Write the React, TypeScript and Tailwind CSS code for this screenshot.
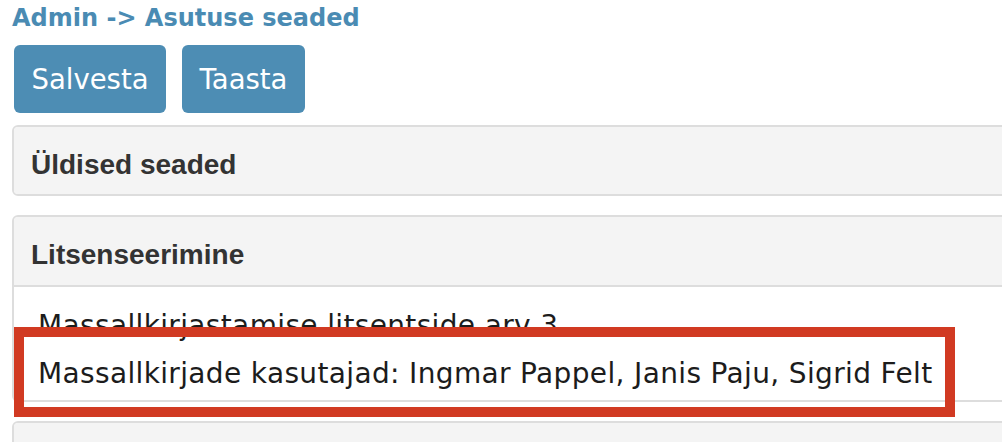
const bodyFont = "font-['DejaVu_Sans',Verdana,sans-serif]";
const headFont = "font-['Liberation_Sans',Arial,sans-serif]";

function Panel({ title, children }: { title?: string; children?: React.ReactNode }) {
  return (
    <div className="w-[1010px] rounded-[6px] border-2 border-[#dddddd] overflow-hidden">
      <div
        className={`bg-[#f4f4f4] h-[67px] pl-[17px] pt-[22px] text-[28px] leading-[32px] font-bold text-[#333333] ${headFont} ${
          children ? "h-[70px] border-b-2 border-[#dddddd]" : ""
        }`}
      >
        {title}
      </div>
      {children}
    </div>
  );
}

export default function App() {
  return (
    <div className="relative w-[1002px] h-[442px] overflow-hidden bg-white">
      <div className="pl-3 pt-[3px] flex flex-col">
        <h1 className={`${bodyFont} text-[24px] leading-[30px] font-bold text-[#4a8bb3]`}>
          Admin -&gt; Asutuse seaded
        </h1>
        <div className="mt-[12px] ml-[2px] flex gap-4">
          <button className={`${bodyFont} w-[152px] h-[68px] rounded-[6px] bg-[#4d8db4] text-white text-[27.5px] leading-[34px]`}>
            Salvesta
          </button>
          <button className={`${bodyFont} w-[123px] h-[68px] rounded-[6px] bg-[#4d8db4] text-white text-[27.5px] leading-[34px]`}>
            Taasta
          </button>
        </div>
        <div className="mt-3 flex flex-col gap-[19px]">
          <Panel title="Üldised seaded" />
          <Panel title="Litsenseerimine">
            <div className={`${bodyFont} bg-white pl-[24px] pt-[15px] pb-[2px] text-[28px] leading-[48px] tracking-[0.35px] text-[#1c1c1c]`}>
              <div>Massallkirjastamise litsentside arv 3</div>
              <div>Massallkirjade kasutajad: Ingmar Pappel, Janis Paju, Sigrid Felt</div>
            </div>
          </Panel>
          <Panel />
        </div>
      </div>
      {/* annotation frame drawn over the page */}
      <div className="absolute left-[14px] top-[327px] w-[941px] h-[90px] border-[10px] border-[#d13a22]" />
    </div>
  );
}
